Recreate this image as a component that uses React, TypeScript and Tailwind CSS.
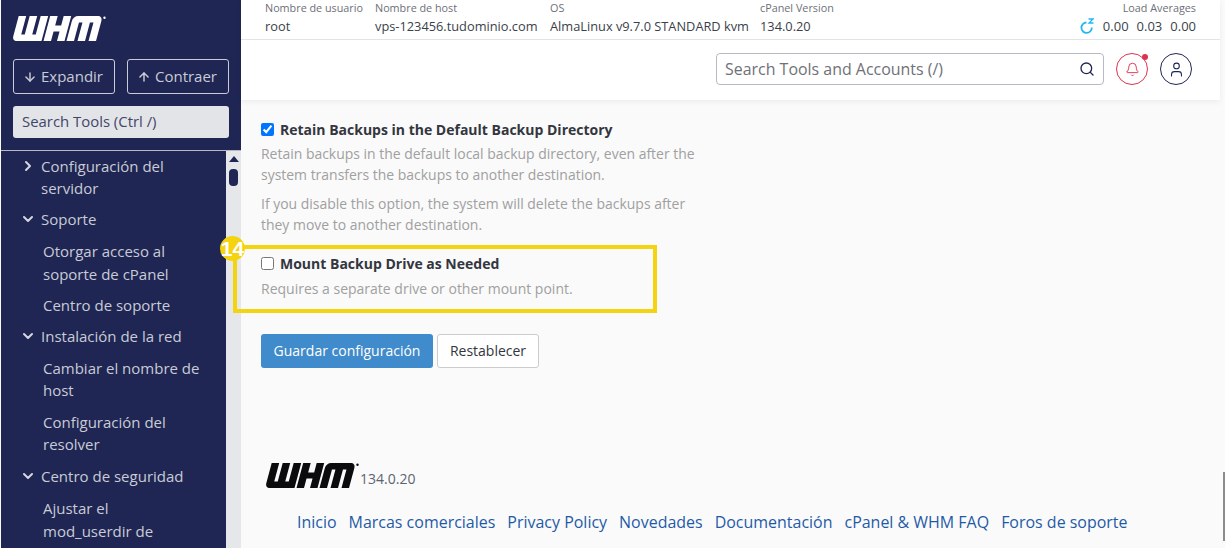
import React from "react";
import { ArrowDown, ArrowUp, ChevronDown, ChevronRight, Search, Bell, User } from "lucide-react";

function Logo({ className, fill }: { className: string; fill: string }) {
  return (
    <svg viewBox="0 0 94 25" className={className} fill={fill}>
      <g transform="translate(6.700 0) skewX(-15)">
        <path d="M0 0h7.500v18.500H11V0h7.500v18.500H22V0h7.500v25H5C2 25 0 23 0 20Z" />
        <path d="M31.500 0H39v9.500h6V0h7.500v25H45V15.500h-6V25h-7.500Z" />
        <path d="M54.500 25V5c0-3 2-5 5-5H79c3 0 5 2 5 5v20h-7.500V6.500H73V25h-7.500V6.500H62V25Z" />
      </g>
      <circle cx="92.500" cy="1.800" r="1.200" />
    </svg>
  );
}

function NavParent({ open, children, last }: { open?: boolean; children: React.ReactNode; last?: boolean }) {
  const Icon = open ? ChevronDown : ChevronRight;
  return (
    <div className={last ? "flex items-start pl-[19px] pr-3 pt-[4px] pb-[6px]" : "flex items-start pl-[19px] pr-3 pt-[3px] pb-[6px]"}>
      <Icon size={16} strokeWidth={3} className="mt-[3px] w-[16px] shrink-0 text-[#d5d7e0]" />
      <span className="ml-[5px] text-[15px] leading-[22px] text-[#c9cbd6]">{children}</span>
    </div>
  );
}

function NavChild({ children, last }: { children: React.ReactNode; last?: boolean }) {
  return (
    <div className={last ? "pl-[42px] pr-4 pt-[4px] pb-[5px] text-[15px] leading-[23px] text-[#c9cbd6]" : "pl-[42px] pr-4 pt-[4px] pb-[5px] text-[15px] leading-[22.500px] text-[#c9cbd6]"}>
      {children}
    </div>
  );
}

function Stat({ label, value, className }: { label: string; value: string; className: string }) {
  return (
    <div className={className}>
      <div className="text-[10.800px] leading-[15px] text-[#6d7078]">{label}</div>
      <div className="mt-[2px] text-[12.800px] leading-[18px] text-[#3b3f4a]">{value}</div>
    </div>
  );
}

function Sidebar() {
  return (
    <aside className="ml-px flex h-[548px] w-[240px] shrink-0 flex-col overflow-hidden bg-[#1f2653]">
      <div className="h-[151px] shrink-0 border-b border-[#b5b7c2] pl-[12px] pr-[12px] pt-[16px]">
        <Logo className="ml-[-1px] h-[25px] w-[94px]" fill="#ffffff" />
        <div className="mt-[18px] flex gap-[12px]">
          <button className="flex h-[35px] w-[102px] items-center justify-center gap-[4px] rounded-[3px] border border-[#c9cbd6] pr-[2px] text-[15px] text-[#c9cbd6]">
            <ArrowDown size={14} strokeWidth={2.500} />Expandir
          </button>
          <button className="flex h-[35px] w-[102px] items-center justify-center gap-[4px] rounded-[3px] border border-[#c9cbd6] pr-[2px] text-[15px] text-[#c9cbd6]">
            <ArrowUp size={14} strokeWidth={2.500} />Contraer
          </button>
        </div>
        <div className="mt-[12px] flex h-[32px] w-[216px] items-center rounded-[3px] bg-[#e3e4e8] pb-[1px] pl-[9px] text-[14.900px] text-[#3f4668]">
          Search Tools (Ctrl /)
        </div>
      </div>
      <div className="flex min-h-0 flex-1">
        <nav className="w-[225px] shrink-0 overflow-hidden pt-px">
          <NavParent>Configuración del<br />servidor</NavParent>
          <NavParent open>Soporte</NavParent>
          <NavChild>Otorgar acceso al<br />soporte de cPanel</NavChild>
          <NavChild>Centro de soporte</NavChild>
          <NavParent open>Instalación de la red</NavParent>
          <NavChild>Cambiar el nombre de<br />host</NavChild>
          <NavChild>Configuración del<br />resolver</NavChild>
          <NavParent open last>Centro de seguridad</NavParent>
          <NavChild last>Ajustar el<br />mod_userdir de</NavChild>
        </nav>
        <div className="flex w-[15px] shrink-0 flex-col items-center bg-[#e6e7ea] pt-[5px]">
          <svg viewBox="0 0 10 6" className="h-[6px] w-[10px]" fill="#1f2653"><path d="M5 0l5 6H0z" /></svg>
          <div className="mt-[7px] h-[17px] w-[9px] rounded-[4px] bg-[#1f2653]" />
        </div>
      </div>
    </aside>
  );
}

function Topbar() {
  return (
    <header className="relative z-10 h-[100px] w-[979px] shrink-0 bg-white shadow-[0_2px_6px_rgba(0,0,0,0.06)]">
      <div className="flex h-[40px] border-b border-[#e3e4e6] pl-[24px] pr-[24px]">
        <Stat label="Nombre de usuario" value="root" className="w-[110px]" />
        <Stat label="Nombre de host" value="vps-123456.tudominio.com" className="w-[175px]" />
        <Stat label="OS" value="AlmaLinux v9.7.0 STANDARD kvm" className="w-[210px]" />
        <Stat label="cPanel Version" value="134.0.20" className="w-[120px]" />
        <div className="ml-auto text-right">
          <div className="text-[10.800px] leading-[15px] text-[#6d7078]">Load Averages</div>
          <div className="mt-[2px] flex items-center justify-end text-[13px] leading-[18px] text-[#3b3f4a]">
            <svg viewBox="0 0 14 16" className="mr-[9px] h-[16px] w-[14px]" fill="none" stroke="#22b8f0" strokeWidth="1.800">
              <path d="M6.500 4.500A5.200 5.200 0 1 0 11.800 9.500" />
              <path d="M8.500 1h4.500l-4 4h4.500" strokeWidth="1.300" />
            </svg>
            <span>0.00</span><span className="ml-[8px]">0.03</span><span className="ml-[8px]">0.00</span>
          </div>
        </div>
      </div>
      <div className="flex items-center pl-[475px] pt-[13px]">
        <div className="flex h-[32px] w-[388px] items-center justify-between rounded-[4px] border border-[#b9b9c3] pl-[8px] pr-[8px] text-[15.950px] text-[#6f7178]">
          <span className="pt-[2px]">Search Tools and Accounts (/)</span>
          <Search size={16} strokeWidth={2} className="text-[#1f2653]" />
        </div>
        <div className="relative ml-[12px] flex h-[32px] w-[32px] items-center justify-center rounded-full border border-[#dc3450]">
          <Bell size={15} strokeWidth={1.500} className="text-[#dc3450]" />
          <span className="absolute right-[-1px] top-[0px] h-[6px] w-[6px] rounded-full bg-[#dc3450]" />
        </div>
        <div className="ml-[12px] flex h-[32px] w-[32px] items-center justify-center rounded-full border border-[#1f2653]">
          <User size={17} strokeWidth={1.500} className="text-[#1f2653]" />
        </div>
      </div>
    </header>
  );
}

function Check({ checked }: { checked?: boolean }) {
  return (
    <input
      type="checkbox"
      readOnly
      checked={!!checked}
      className="mt-[4px] h-[13px] w-[13px] shrink-0 accent-[#0075ff]"
    />
  );
}

function Main() {
  return (
    <div className="flex h-[548px] min-w-0 flex-1 flex-col bg-[#fafafa]">
      <Topbar />
      <main className="flex-1 pl-[20px] pt-[19px]">
        <div className="w-[440px]">
          <label className="flex gap-[6px] text-[14px] font-bold leading-[21px] text-[#333640]">
            <Check checked />Retain Backups in the Default Backup Directory
          </label>
          <p className="mt-[4px] text-[13.960px] leading-[20.500px] text-[#a0a0a0]">
            Retain backups in the default local backup directory, even after the system transfers the backups to another destination.
          </p>
          <p className="mt-[9px] text-[13.960px] leading-[20.500px] text-[#a0a0a0]">
            If you disable this option, the system will delete the backups after they move to another destination.
          </p>
        </div>
        <div className="relative ml-[-28px] mt-[10px] h-[68px] w-[424px] border-[4px] border-[#f4d311] pl-[24px] pt-[4px]">
          <span className="absolute left-[-17px] top-[-13px] flex h-[25px] w-[25px] items-center justify-center rounded-full bg-[#f4d311] font-['Liberation_Sans',sans-serif] text-[21px] font-bold text-white">14</span>
          <label className="flex gap-[6px] text-[14px] font-bold leading-[21px] text-[#333640]">
            <Check />Mount Backup Drive as Needed
          </label>
          <p className="mt-[4px] text-[14px] leading-[21px] text-[#a0a0a0]">Requires a separate drive or other mount point.</p>
        </div>
        <div className="mt-[21px] flex gap-[4px]">
          <button className="h-[34px] w-[172px] rounded-[3px] bg-[#3f8bcb] pb-[2px] text-[14px] text-white">Guardar configuración</button>
          <button className="h-[34px] w-[102px] rounded-[3px] border border-[#cccccc] bg-white pb-[2px] text-[14px] text-[#333640]">Restablecer</button>
        </div>
        <div className="mt-[95px] flex items-end pl-[4px]">
          <Logo className="h-[25px] w-[94px]" fill="#0b0b0d" />
          <span className="mb-[-1px] ml-[1px] text-[14px] leading-[20px] text-[#5c6470]">134.0.20</span>
        </div>
        <div className="mt-[22px] flex gap-[12px] pl-[36px] text-[15.980px] leading-[24px] text-[#1f5aa8]">
          <a>Inicio</a><a>Marcas comerciales</a><a>Privacy Policy</a><a>Novedades</a><a>Documentación</a><a>cPanel &amp; WHM FAQ</a><a>Foros de soporte</a>
        </div>
      </main>
    </div>
  );
}

export default function App() {
  return (
    <div className="relative flex h-[548px] w-[1225px] overflow-hidden bg-[#fafafa] font-['Open_Sans',sans-serif]">
      <Sidebar />
      <Main />
      <div className="absolute right-0 top-[472px] h-[69px] w-[2px] bg-[#8c8c8c]" />
    </div>
  );
}
